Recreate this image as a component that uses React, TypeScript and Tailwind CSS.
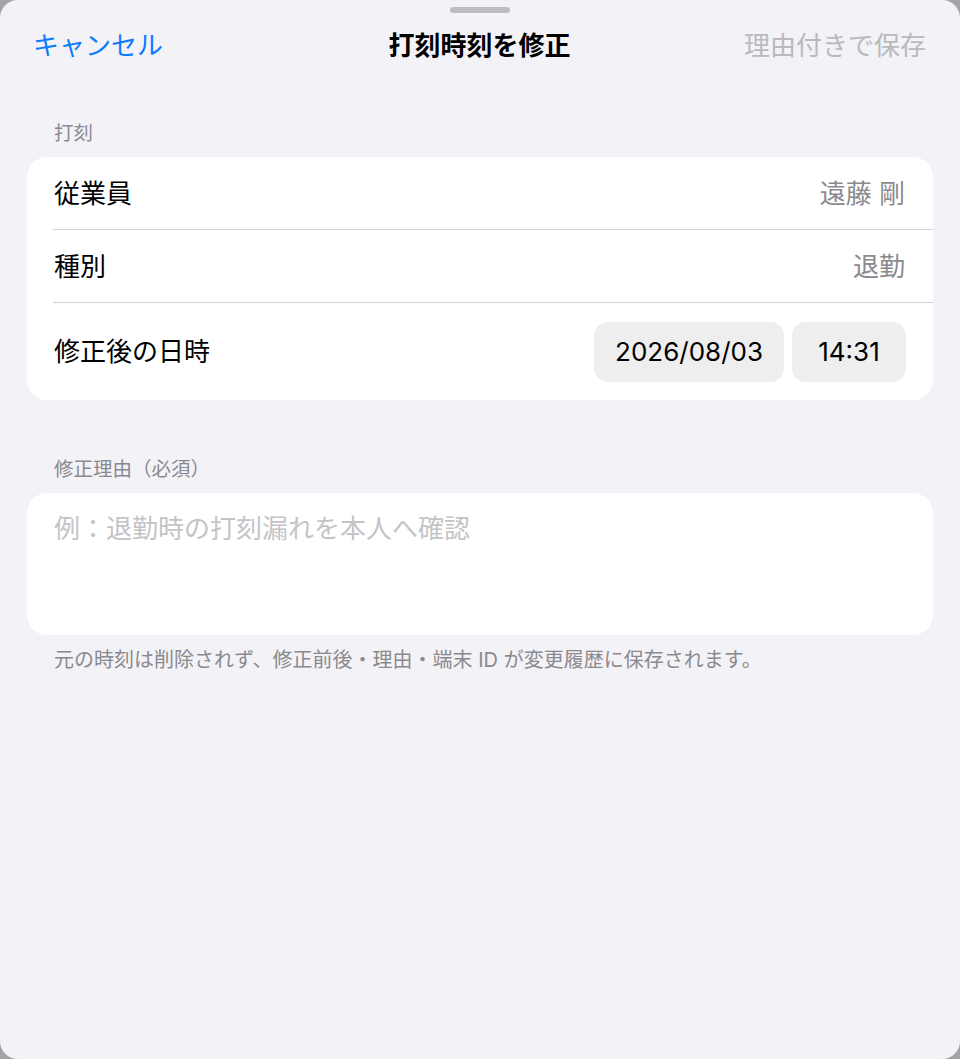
import React from "react";

export default function App() {
  return (
    <div className="w-[960px] h-[1059px] bg-[#a3a3a7] font-[Inter,'Noto_Sans_CJK_JP',sans-serif]">
      <div className="w-full h-full rounded-[18px] bg-[#f2f2f7] overflow-hidden flex flex-col">
        <div className="pt-[7px] flex justify-center">
          <div className="w-[60px] h-[6px] rounded-full bg-[#bdbdc2]" />
        </div>
        <div className="h-[66px] flex items-center justify-between pl-[33px] pr-[34px] text-[26px] leading-none">
          <span className="text-[#0a7aff] w-[200px]">キャンセル</span>
          <span className="font-semibold text-black">打刻時刻を修正</span>
          <span className="text-[#b9b9be] w-[200px] text-right">理由付きで保存</span>
        </div>

        <div className="px-[27px] flex flex-col">
          <div className="mt-[42px] pl-[27px] h-[24px] leading-[24px] text-[19.5px] text-[#8a8a8e]">打刻</div>
          <div className="mt-[12px] bg-white rounded-[20px] flex flex-col">
            <div className="h-[72px] flex items-center justify-between pl-[27px] pr-[28px] text-[26px]">
              <span className="text-black">従業員</span>
              <span className="text-[#8a8a8e]">遠藤 剛</span>
            </div>
            <div className="ml-[26px] h-px bg-[#d1d1d6]" />
            <div className="h-[72px] flex items-center justify-between pl-[27px] pr-[28px] text-[26px]">
              <span className="text-black">種別</span>
              <span className="text-[#8a8a8e]">退勤</span>
            </div>
            <div className="ml-[26px] h-px bg-[#d1d1d6]" />
            <div className="h-[97px] flex items-center justify-between pl-[27px] pr-[27px] text-[26px]">
              <span className="text-black">修正後の日時</span>
              <div className="flex gap-[8px]">
                <div className="w-[190px] h-[60px] rounded-[14px] bg-[#eeeeef] flex items-center justify-center text-black">2026/08/03</div>
                <div className="w-[114px] h-[60px] rounded-[14px] bg-[#eeeeef] flex items-center justify-center text-black">14:31</div>
              </div>
            </div>
          </div>

          <div className="mt-[57px] pl-[27px] h-[24px] leading-[24px] text-[19.5px] text-[#8a8a8e]">修正理由（必須）</div>
          <div className="mt-[12px] bg-white rounded-[20px] h-[142px] pl-[27px] pt-[20px] text-[26px] leading-[31px] text-[#c4c4c7]">
            例：退勤時の打刻漏れを本人へ確認
          </div>
          <div className="mt-[13px] pl-[27px] text-[20px] leading-[24px] text-[#8a8a8e]">
            元の時刻は削除されず、修正前後・理由・端末 ID が変更履歴に保存されます。
          </div>
        </div>
      </div>
    </div>
  );
}
